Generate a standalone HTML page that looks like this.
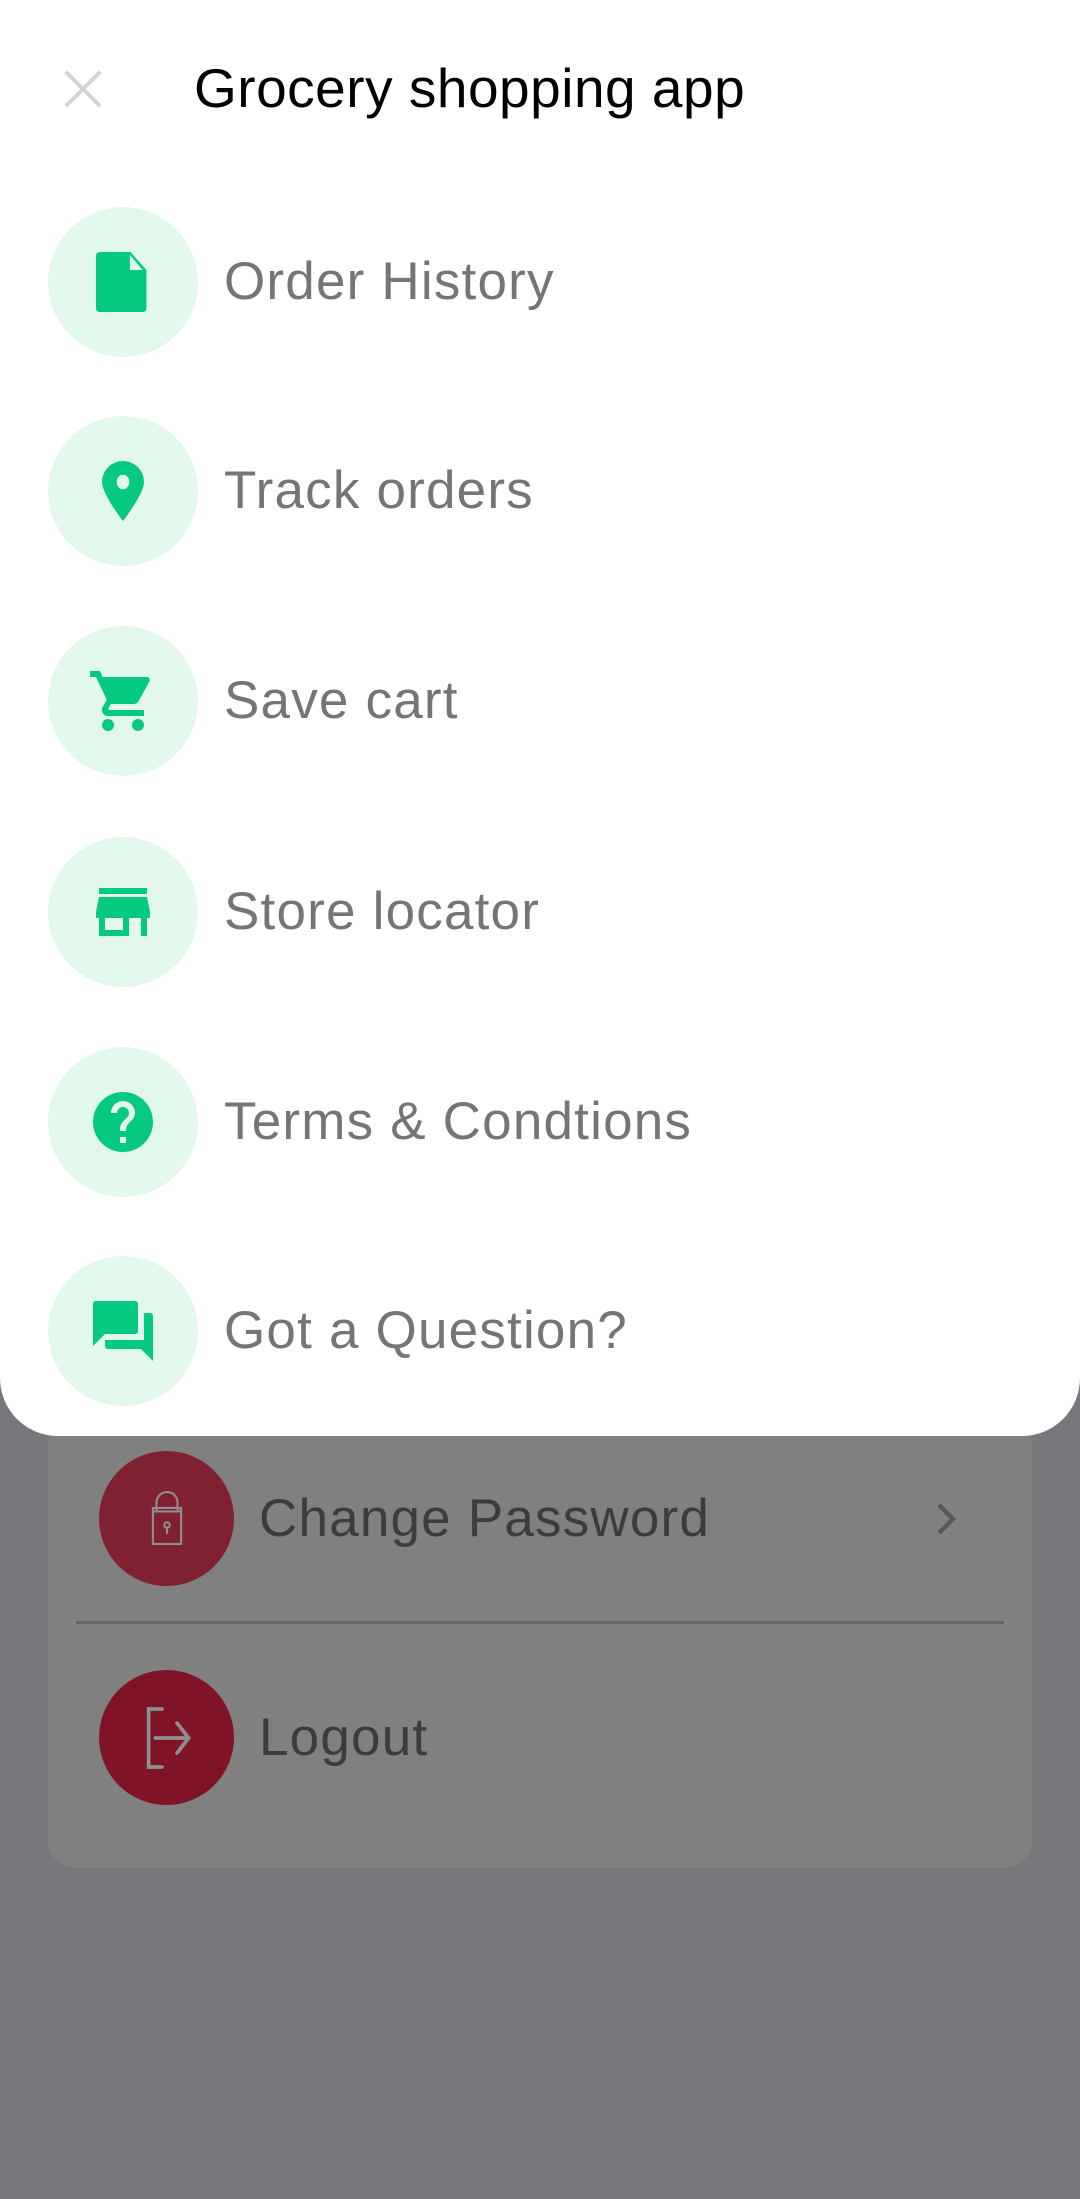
<!DOCTYPE html>
<html><head><meta charset="utf-8">
<style>
*{margin:0;padding:0;box-sizing:border-box}
html,body{width:1080px;height:2199px;overflow:hidden}
body{background:#75777b;font-family:"Liberation Sans",Roboto,sans-serif;position:relative}
.card{position:absolute;left:48px;top:1300px;width:984px;height:568px;background:#808080;border-radius:28px}
.sheet{position:absolute;left:0;top:0;width:1080px;height:1436px;background:#fff;border-radius:0 0 58px 58px}
.close{position:absolute;left:60px;top:66px}
.title{position:absolute;left:194px;top:56px;font-size:55px;color:#000;line-height:64px;letter-spacing:0.5px}
.item{position:absolute;left:48px;width:1000px;height:150px}
.circ{position:absolute;left:0;top:0;width:150px;height:150px;border-radius:50%;background:#e3f8ec;display:flex;align-items:center;justify-content:center}
.lbl{position:absolute;left:176px;top:44px;font-size:53px;line-height:62px;color:#757575;letter-spacing:1.2px}
.row{position:absolute;left:99px;width:900px;height:136px}
.rc{position:absolute;left:0;top:0;width:135px;height:135px;border-radius:50%;display:flex;align-items:center;justify-content:center}
.rl{position:absolute;left:160px;top:37px;font-size:53px;line-height:62px;color:#3c3c3c;letter-spacing:1.2px}
.div{position:absolute;left:76px;top:1621px;width:928px;height:3px;background:#666}
</style></head><body>
<div class="card"></div>
<div class="row" style="top:1451px">
 <div class="rc" style="background:#7f2131">
  <svg width="72" height="72" viewBox="0 0 24 24" fill="none" stroke="#8f8f8f" stroke-width="0.7"><path d="M8.5 9.5V6.5a3.5 3.5 0 0 1 7 0v3"/><path d="M7.3 8.3h9.4v12H7.3z"/><path d="M7.3 9.5h9.4"/><circle cx="12" cy="14" r="0.9"/><path d="M12 14.5v2.5"/></svg>
 </div>
 <div class="rl">Change Password</div>
 <svg style="position:absolute;left:822px;top:44px" width="48" height="48" viewBox="0 0 24 24" fill="none" stroke="#555a58" stroke-width="2.2"><path d="M9 5l7 7-7 7"/></svg>
</div>
<div class="div"></div>
<div class="row" style="top:1670px">
 <div class="rc" style="background:#7e1426">
  <svg width="80" height="80" viewBox="0 0 24 24" fill="none" stroke="#8f8f8f" stroke-width="1.1" stroke-linecap="round"><path d="M10.5 3.3H6.5v17.4h4"/><path d="M8.5 12h10M15 7.5l3.5 4.5-3.5 4.5"/></svg>
 </div>
 <div class="rl">Logout</div>
</div>

<div class="sheet">
 <svg class="close" width="46" height="46" viewBox="0 0 24 24" stroke="#d2d4da" stroke-width="2"><path d="M3 3l18 18M21 3L3 21"/></svg>
 <div class="title">Grocery shopping app</div>

 <div class="item" style="top:207px"><div class="circ">
  <svg width="72" height="72" viewBox="0 0 24 24" fill="#05c97e" fill-rule="evenodd"><path d="M4.2 2h10.3l5.3 6v12.8a1.2 1.2 0 0 1-1.2 1.2H4.2A1.2 1.2 0 0 1 3 20.8V3.2A1.2 1.2 0 0 1 4.2 2zM14.3 2.9V8h4.2z"/></svg>
 </div><div class="lbl">Order History</div></div>

 <div class="item" style="top:416px"><div class="circ">
  <svg width="72" height="72" viewBox="0 0 24 24" fill="#05c97e" fill-rule="evenodd"><path d="M12 2a7 7 0 0 0-7 7c0 4 7 13 7 13s7-9 7-13a7 7 0 0 0-7-7zm0 9.4a2.1 2.4 0 1 1 0-4.8 2.1 2.4 0 0 1 0 4.8z"/></svg>
 </div><div class="lbl">Track orders</div></div>

 <div class="item" style="top:626px"><div class="circ">
  <svg width="72" height="72" viewBox="0 0 24 24" fill="#05c97e"><path d="M7 18c-1.1 0-2 .9-2 2s.9 2 2 2 2-.9 2-2-.9-2-2-2zM1 2v2h2l3.6 7.6-1.4 2.4c-.1.3-.2.6-.2 1 0 1.1.9 2 2 2h12v-2H7.4c-.1 0-.3-.1-.3-.3v-.1l.9-1.6h7.5c.8 0 1.4-.4 1.7-1l3.6-6.5c.1-.2.1-.3.1-.5 0-.6-.4-1-1-1H5.2l-.9-2H1zm16 16c-1.1 0-2 .9-2 2s.9 2 2 2 2-.9 2-2-.9-2-2-2z"/></svg>
 </div><div class="lbl">Save cart</div></div>

 <div class="item" style="top:837px"><div class="circ">
  <svg width="72" height="72" viewBox="0 0 24 24" fill="#05c97e"><path d="M20 4H4v2h16V4zm1 10v-2l-1-5H4l-1 5v2h1v6h10v-6h4v6h2v-6h1zm-9 4H6v-4h6v4z"/></svg>
 </div><div class="lbl">Store locator</div></div>

 <div class="item" style="top:1047px"><div class="circ">
  <svg width="72" height="72" viewBox="0 0 24 24" fill="#05c97e"><path d="M12 2C6.48 2 2 6.48 2 12s4.48 10 10 10 10-4.48 10-10S17.52 2 12 2zm1 17h-2v-2h2v2zm2.07-7.750l-.9.92C13.450 12.900 13 13.500 13 15h-2v-.5c0-1.100.45-2.100 1.170-2.830l1.240-1.260c.37-.36.59-.86.59-1.410 0-1.100-.9-2-2-2s-2 .9-2 2H8c0-2.210 1.790-4 4-4s4 1.790 4 4c0 .88-.36 1.680-.93 2.250z"/></svg>
 </div><div class="lbl">Terms &amp; Condtions</div></div>

 <div class="item" style="top:1256px"><div class="circ">
  <svg width="72" height="72" viewBox="0 0 24 24" fill="#05c97e"><path d="M21 6h-2v9H6v2c0 .55.45 1 1 1h11l4 4V7c0-.55-.45-1-1-1zm-4 6V3c0-.55-.45-1-1-1H3c-.55 0-1 .45-1 1v14l4-4h10c.55 0 1-.45 1-1z"/></svg>
 </div><div class="lbl">Got a Question?</div></div>
</div>
</body></html>
